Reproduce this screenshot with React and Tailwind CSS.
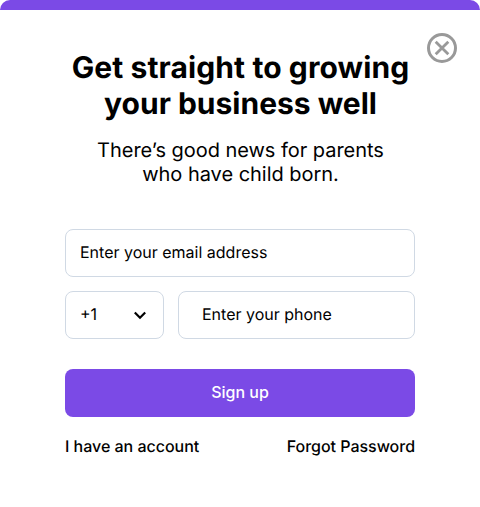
export default function App() {
  return (
    <main className="relative h-[507px] w-[480px] overflow-hidden rounded-t-[10px] border-t-[10px] border-[#7b4ae6] bg-white px-[65px] font-['Inter',sans-serif] text-black [text-rendering:geometricPrecision]">
      <button aria-label="Close" className="absolute top-[20px] right-[20px] size-[36px] p-0">
        <svg viewBox="0 0 36 36" className="size-9" fill="none" stroke="#999999" strokeWidth="3">
          <circle cx="18" cy="18" r="13.5" />
          <path d="M11.7 11.7 24.3 24.3M24.3 11.7 11.7 24.3" strokeWidth="2.8" />
        </svg>
      </button>
      <h1 className="-mx-5 pt-[40px] pl-px text-center text-[30px] leading-[36px] font-bold whitespace-nowrap">
        <span className="tracking-[0.1px]">Get straight to growing</span><br />your business well
      </h1>
      <p className="mt-[16px] pl-px text-center text-[20px] leading-[24px] tracking-[-0.03px]">
        There’s good news for parents<br />who have child born.
      </p>
      <form className="mt-[43px]">
        <div className="flex h-12 items-center rounded-lg border border-[#d0d9e4] px-[14px] pb-[2px] text-base">Enter your email address</div>
        <div className="mt-[14px] flex gap-[14px]">
          <div className="flex h-12 w-[99px] items-center justify-between rounded-lg border border-[#d0d9e4] pr-[16px] pl-[14px] text-base">
            <span className="pb-[2px]">+1</span>
            <svg viewBox="0 0 14 14" className="size-[14px]" fill="none" stroke="#000" strokeWidth="2.2"><path d="m1.8 4.5 5.2 5.2 5.2-5.2" /></svg>
          </div>
          <div className="flex h-12 flex-1 items-center rounded-lg border border-[#d0d9e4] pb-[2px] pl-[23px] text-base">Enter your phone</div>
        </div>
        <button type="button" className="mt-[30px] flex h-12 w-full items-center justify-center rounded-lg bg-[#7b4ae6] pb-[2px] text-base font-medium text-white">Sign up</button>
        <div className="mt-[17px] flex justify-between text-base font-medium tracking-[-0.02px]">
          <a>I have an account</a>
          <a>Forgot Password</a>
        </div>
      </form>
    </main>
  );
}
